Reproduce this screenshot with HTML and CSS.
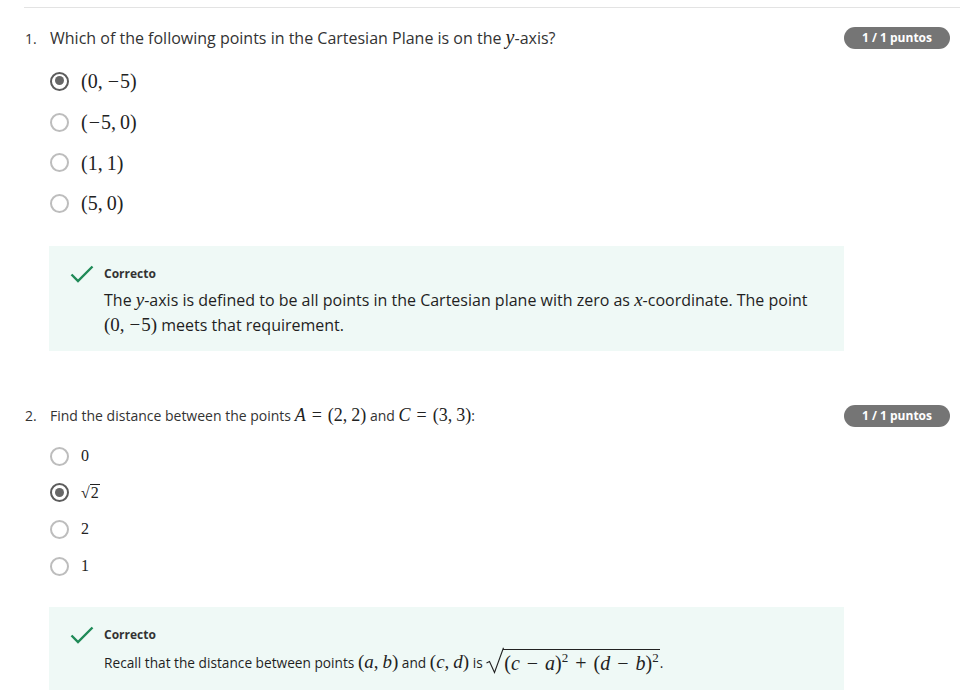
FILE: index.html
```html
<!DOCTYPE html>
<html>
<head>
<meta charset="utf-8">
<link rel="stylesheet" href="styles.css">
</head>
<body>
<div class="page">
  <div class="divider"></div>

  <section class="question q1">
    <div class="q-head">
      <span class="q-num">1.</span>
      <span class="q-text">Which of the following points in the Cartesian Plane is on the <span class="m mi">y</span>-axis?</span>
      <span class="badge">1 / 1 puntos</span>
    </div>
    <ul class="options">
      <li class="opt"><span class="radio checked"></span><span class="m">(0,<span class="ts"></span><span class="minus">−</span>5)</span></li>
      <li class="opt"><span class="radio"></span><span class="m">(<span class="minus">−</span>5,<span class="ts"></span>0)</span></li>
      <li class="opt"><span class="radio"></span><span class="m">(1,<span class="ts"></span>1)</span></li>
      <li class="opt"><span class="radio"></span><span class="m">(5,<span class="ts"></span>0)</span></li>
    </ul>
    <div class="feedback">
      <svg class="check" width="24" height="18" viewBox="0 0 24 18"><polyline points="1.5,9.5 8,16 22.5,1.5" fill="none" stroke="#1f8a57" stroke-width="2.4"/></svg>
      <div class="fb-body">
        <div class="fb-title">Correcto</div>
        <p class="fb-text">The <span class="m mi">y</span>-axis is defined to be all points in the Cartesian plane with zero as <span class="m mi">x</span>-coordinate. The point <span class="m">(0,<span class="ts"></span><span class="minus">−</span>5)</span> meets that requirement.</p>
      </div>
    </div>
  </section>

  <section class="question q2">
    <div class="q-head">
      <span class="q-num">2.</span>
      <span class="q-text">Find the distance between the points <span class="m"><span class="mi">A</span><span class="rel">=</span>(2,<span class="ts"></span>2)</span> and <span class="m"><span class="mi">C</span><span class="rel">=</span>(3,<span class="ts"></span>3)</span>:</span>
      <span class="badge">1 / 1 puntos</span>
    </div>
    <ul class="options">
      <li class="opt"><span class="radio"></span><span class="m">0</span></li>
      <li class="opt"><span class="radio checked"></span><span class="m"><span class="rad">√</span><span class="over">2</span></span></li>
      <li class="opt"><span class="radio"></span><span class="m">2</span></li>
      <li class="opt"><span class="radio"></span><span class="m">1</span></li>
    </ul>
    <div class="feedback">
      <svg class="check" width="24" height="18" viewBox="0 0 24 18"><polyline points="1.5,9.5 8,16 22.5,1.5" fill="none" stroke="#1f8a57" stroke-width="2.4"/></svg>
      <div class="fb-body">
        <div class="fb-title">Correcto</div>
        <p class="fb-text">Recall that the distance between points <span class="m">(<span class="mi">a</span>,<span class="ts"></span><span class="mi">b</span>)</span> and <span class="m">(<span class="mi">c</span>,<span class="ts"></span><span class="mi">d</span>)</span> is <span class="m sqrt"><svg class="bigrad" width="18" height="27" viewBox="0 0 18 27"><polyline points="0.5,16 3.5,14.5 8.5,25.5 17.5,0.8" fill="none" stroke="#222" stroke-width="1.1"/></svg><span class="sq-body">(<span class="mi">c</span><span class="bin">−</span><span class="mi">a</span>)<sup>2</sup><span class="bin">+</span>(<span class="mi">d</span><span class="bin">−</span><span class="mi">b</span>)<sup>2</sup></span></span>.</p>
      </div>
    </div>
  </section>
</div>
</body>
</html>
```

FILE: styles.css
```css
html, body {
  margin: 0;
  padding: 0;
  background: #ffffff;
}

body {
  font-family: "Open Sans", "Noto Sans", sans-serif;
  color: #2b2b2b;
}

.page {
  padding: 7px 3px 0 24px;
}

.divider {
  border-top: 1px solid #e3e3e3;
}

.q-head {
  display: flex;
  align-items: center;
  height: 22px;
  padding-right: 10px;
}

.q1 .q-head {
  margin-top: 19px;
}

.q2 .q-head {
  margin-top: 54px;
}

.q-num {
  width: 26px;
  padding-left: 1px;
  box-sizing: border-box;
  font-size: 14px;
  color: #333;
}

.q-text {
  flex: 1;
  font-size: 16px;
  color: #333;
  white-space: nowrap;
}

.q2 .q-text {
  font-size: 14px;
}

.q2 .q-text .m {
  font-size: 18px;
}

.badge {
  flex: none;
  width: 106px;
  height: 22px;
  line-height: 22px;
  border-radius: 11px;
  background: #757575;
  color: #fff;
  font-size: 12px;
  font-weight: 700;
  text-align: center;
}

.m {
  font-family: "Liberation Serif", "DejaVu Serif", serif;
  font-size: 20px;
  line-height: 1;
  color: #222;
}

.mi {
  font-style: italic;
}

.ts {
  display: inline-block;
  width: 4px;
}

.minus {
  padding: 0 1px;
}

.rel {
  padding: 0 6px;
}

.options {
  list-style: none;
  margin: 0;
  padding: 0 0 0 26px;
}

.q1 .options {
  margin-top: 12px;
}

.q2 .options {
  margin-top: 11px;
}

.opt {
  display: flex;
  align-items: center;
  gap: 12px;
}

.q1 .opt {
  height: 40.7px;
}

.q2 .opt {
  height: 36.7px;
}

.q2 .opt .m {
  font-size: 16px;
}

.radio {
  flex: none;
  box-sizing: border-box;
  width: 19px;
  height: 19px;
  border-radius: 50%;
  border: 2px solid #bdbdbd;
  background: #fff;
  position: relative;
}

.radio.checked {
  border: 2.5px solid #5c5c5c;
}

.radio.checked::after {
  content: "";
  position: absolute;
  left: 2.5px;
  top: 2.5px;
  width: 9px;
  height: 9px;
  border-radius: 50%;
  background: #676767;
}

.rad {
  font-size: 16px;
}

.over {
  border-top: 1px solid #222;
  padding: 0 1px;
  line-height: 15px;
  display: inline-block;
}

.feedback {
  display: flex;
  align-items: flex-start;
  margin-left: 25px;
  width: 795px;
  background: #eff9f6;
  box-sizing: border-box;
  padding: 20px 20px 13px 21px;
}

.q1 .feedback {
  margin-top: 22px;
}

.q2 .feedback {
  margin-top: 22px;
  padding-bottom: 20px;
}

.check {
  flex: none;
  margin-top: -1px;
  margin-right: 10px;
}

.fb-body {
  flex: 1;
}

.fb-title {
  font-size: 12px;
  font-weight: 700;
  line-height: 16px;
  color: #333;
}

.fb-text {
  margin: 6px 0 0;
  font-size: 16px;
  line-height: 25px;
  color: #1f1f1f;
}

.q1 .fb-text .m {
  font-size: 19px;
}

.q2 .fb-text {
  font-size: 13.7px;
  margin-top: 4px;
  line-height: 24px;
}

.q2 .fb-text .m {
  font-size: 19px;
}

.sqrt {
  display: inline-flex;
  align-items: flex-end;
  vertical-align: -6px;
}

.q2 .fb-text .sqrt {
  font-size: 20px;
}

.bigrad {
  flex: none;
  margin-right: -1px;
}

.sq-body {
  border-top: 1.1px solid #222;
  line-height: 22px;
  padding: 2px 1px 0 1px;
}

.sq-body sup {
  font-size: 13px;
  line-height: 0;
}

.bin {
  padding: 0 7px;
}
```
